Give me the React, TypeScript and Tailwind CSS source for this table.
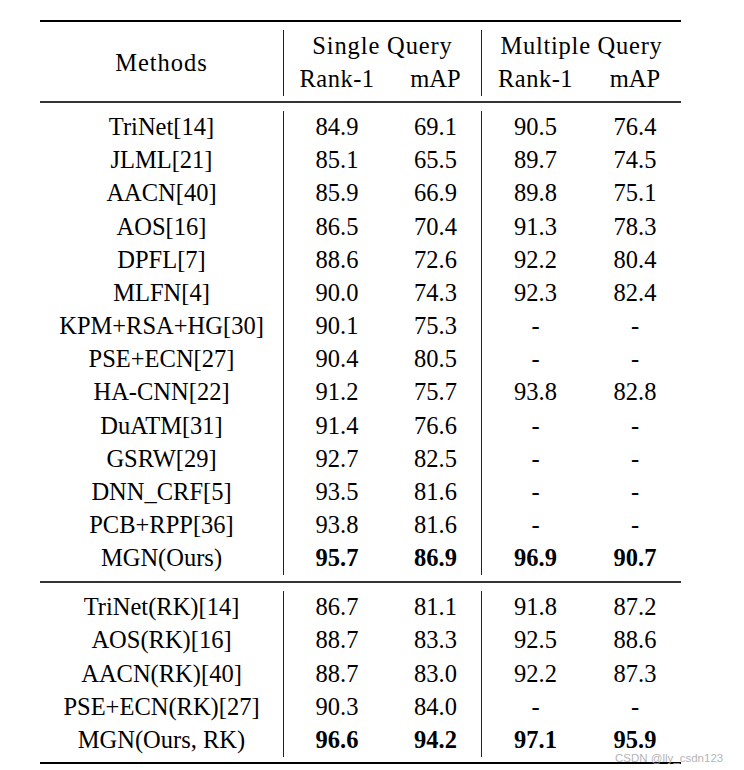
const top = [
  ["TriNet[14]", "84.9", "69.1", "90.5", "76.4"],
  ["JLML[21]", "85.1", "65.5", "89.7", "74.5"],
  ["AACN[40]", "85.9", "66.9", "89.8", "75.1"],
  ["AOS[16]", "86.5", "70.4", "91.3", "78.3"],
  ["DPFL[7]", "88.6", "72.6", "92.2", "80.4"],
  ["MLFN[4]", "90.0", "74.3", "92.3", "82.4"],
  ["KPM+RSA+HG[30]", "90.1", "75.3", "-", "-"],
  ["PSE+ECN[27]", "90.4", "80.5", "-", "-"],
  ["HA-CNN[22]", "91.2", "75.7", "93.8", "82.8"],
  ["DuATM[31]", "91.4", "76.6", "-", "-"],
  ["GSRW[29]", "92.7", "82.5", "-", "-"],
  ["DNN_CRF[5]", "93.5", "81.6", "-", "-"],
  ["PCB+RPP[36]", "93.8", "81.6", "-", "-"],
];

const reranked = [
  ["TriNet(RK)[14]", "86.7", "81.1", "91.8", "87.2"],
  ["AOS(RK)[16]", "88.7", "83.3", "92.5", "88.6"],
  ["AACN(RK)[40]", "88.7", "83.0", "92.2", "87.3"],
  ["PSE+ECN(RK)[27]", "90.3", "84.0", "-", "-"],
];

const cols = "grid grid-cols-[243px_107px_91px_108px_92px]";

function Row({ cells, bold }: { cells: string[]; bold?: boolean }) {
  return (
    <div className={`${cols} h-[33.2px] items-center`}>
      <div className="text-center">{cells[0]}</div>
      <div className="flex h-full items-center justify-center border-l border-[#222]">
        <span className={bold ? "font-bold" : ""}>{cells[1]}</span>
      </div>
      <div className={`text-center ${bold ? "font-bold" : ""}`}>{cells[2]}</div>
      <div className="flex h-full items-center justify-center border-l border-[#222]">
        <span className={bold ? "font-bold" : ""}>{cells[3]}</span>
      </div>
      <div className={`text-center ${bold ? "font-bold" : ""}`}>{cells[4]}</div>
    </div>
  );
}

export default function App() {
  return (
    <div className="relative h-[770px] w-[744px] bg-white text-black">
      <div className="pl-[40px] pt-[20px] font-['Liberation_Serif',serif] text-[24.5px] leading-none">
        <div className="w-[641px]">
          <div className="h-[2px] bg-black" />
          <div className="pb-[5px] pt-[8px]">
            <div className={`${cols} h-[66px]`}>
              <div className="flex items-center justify-center tracking-[0.04em]">Methods</div>
              <div className="col-span-2 flex flex-col border-l border-[#222]">
                <div className="flex h-[33px] items-center justify-center tracking-[0.035em]">
                  Single Query
                </div>
                <div className="grid h-[33px] grid-cols-[106px_91px] items-center">
                  <div className="text-center tracking-[0.02em]">Rank-1</div>
                  <div className="text-center">mAP</div>
                </div>
              </div>
              <div className="col-span-2 flex flex-col border-l border-[#222]">
                <div className="flex h-[33px] items-center justify-center tracking-[0.03em]">
                  Multiple Query
                </div>
                <div className="grid h-[33px] grid-cols-[107px_92px] items-center">
                  <div className="text-center tracking-[0.02em]">Rank-1</div>
                  <div className="text-center">mAP</div>
                </div>
              </div>
            </div>
          </div>
          <div className="h-[1.6px] bg-[#333]" />
          <div className="pb-[6px] pt-[8px]">
            {top.map((r) => (
              <Row key={r[0]} cells={r} />
            ))}
            <Row cells={["MGN(Ours)", "95.7", "86.9", "96.9", "90.7"]} bold />
          </div>
          <div className="h-[1.6px] bg-[#333]" />
          <div className="pb-[5px] pt-[8px]">
            {reranked.map((r) => (
              <Row key={r[0]} cells={r} />
            ))}
            <Row cells={["MGN(Ours, RK)", "96.6", "94.2", "97.1", "95.9"]} bold />
          </div>
          <div className="h-[2.5px] bg-black" />
        </div>
      </div>
      <div className="absolute left-[615px] top-[750px] font-['Liberation_Sans',sans-serif] text-[11.5px] text-[#b5b5b5]">
        CSDN @lly_csdn123
      </div>
    </div>
  );
}
